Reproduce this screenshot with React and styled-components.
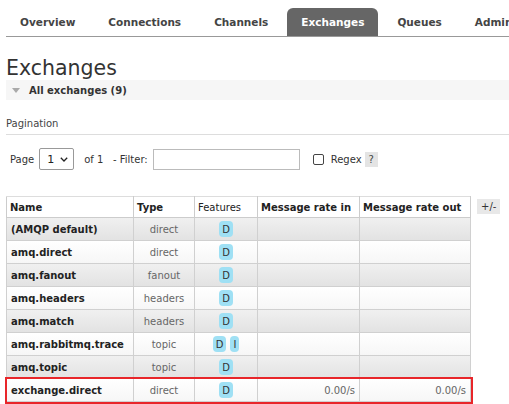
import React from 'react';
import styled, { createGlobalStyle } from 'styled-components';

const GlobalStyle = createGlobalStyle`
  body {
    margin: 0;
    background: #fff;
    font-family: "DejaVu Sans", Verdana, sans-serif;
    color: #444;
  }
`;

const Page = styled.div`
  width: 509px;
  height: 404px;
  overflow: hidden;
  padding: 8px 0 0 6px;
  box-sizing: border-box;
`;

const Tabs = styled.ul`
  display: flex;
  gap: 5px;
  margin: 0;
  padding: 0;
  list-style: none;
  border-bottom: 1px solid #999;
  white-space: nowrap;
`;

const Tab = styled.li`
  height: 28px;
  line-height: 28px;
  padding: 0 14px;
  font-size: 10.5px;
  font-weight: bold;
  color: ${p => (p.active ? '#fff' : '#444')};
  background: ${p => (p.active ? '#666' : 'transparent')};
  border-radius: 6px 6px 0 0;
`;

const Title = styled.h1`
  margin: 19px 0 0;
  font-size: 20.5px;
  font-weight: normal;
  color: #333;
  line-height: 24px;
`;

const SectionBar = styled.div`
  display: flex;
  align-items: center;
  gap: 9px;
  height: 20px;
  padding-left: 6px;
  background: #f6f6f6;
  font-size: 10px;
  font-weight: bold;
  color: #333;
`;

const Arrow = styled.span`
  width: 0;
  height: 0;
  border-left: 4px solid transparent;
  border-right: 4px solid transparent;
  border-top: 5px solid #aaa;
`;

const SubHead = styled.div`
  margin-top: 18px;
  padding-bottom: 5px;
  border-bottom: 1px solid #ddd;
  font-size: 10px;
  color: #444;
`;

const Controls = styled.div`
  display: flex;
  align-items: center;
  margin: 13px 0 0 4px;
  font-size: 10px;
  color: #333;
`;

const Select = styled.div`
  display: flex;
  align-items: center;
  gap: 6px;
  height: 20px;
  margin: 0 10px 0 5px;
  padding: 0 5px 0 7px;
  border: 1px solid #999;
  border-radius: 2px;
  font-size: 11px;
  color: #222;
`;

const FilterInput = styled.div`
  width: 145px;
  height: 19px;
  margin: 0 13px 0 5px;
  border: 1px solid #bbb;
`;

const Check = styled.span`
  width: 9px;
  height: 9px;
  margin-right: 7px;
  border: 1px solid #444;
  border-radius: 2px;
`;

const Help = styled.span`
  margin-left: 3px;
  padding: 2px 4px;
  background: #e4e4e4;
  color: #444;
`;

const TableRow = styled.div`
  display: flex;
  align-items: flex-start;
  gap: 6px;
  margin-top: 26px;
`;

const Table = styled.table`
  width: 464px;
  border-collapse: collapse;
  table-layout: fixed;
  font-size: 10px;
`;

const Th = styled.th`
  height: 20px;
  padding: 0 3px;
  text-align: ${p => p.align || 'left'};
  font-weight: ${p => (p.plain ? 'normal' : 'bold')};
  color: #222;
  border: 1px solid #ccc;
  border-top-color: #ddd;
  white-space: nowrap;
`;

const Tr = styled.tr`
  background: ${p =>
    p.odd
      ? 'linear-gradient(#f0f0f0, #e2e2e2)'
      : 'linear-gradient(#fff, #f6f6f6)'};
  outline: ${p => (p.mark ? '2px solid #e8262a' : 'none')};
  outline-offset: 0px;
`;

const Td = styled.td`
  height: 22px;
  padding: 0 4px;
  border: 1px solid #d0d0d0;
  text-align: ${p => p.align || 'left'};
  font-weight: ${p => (p.bold ? 'bold' : 'normal')};
  color: ${p => (p.bold ? '#222' : '#666')};
  white-space: nowrap;
`;

const Badge = styled.span`
  display: inline-block;
  margin: 0 2px;
  padding: 2px 3px 1px;
  border-radius: 4px;
  background: #9fe0f4;
  color: #333;
  line-height: 13px;
`;

const Toggle = styled.span`
  margin-top: 3px;
  padding: 2px 4px;
  background: #e8e8e8;
  font-size: 10px;
  color: #333;
`;

const Chevron = () => (
  <svg width="8" height="5" viewBox="0 0 8 5">
    <path d="M0.8 0.8 L4 4 L7.2 0.8" fill="none" stroke="#222" strokeWidth="1.3" />
  </svg>
);

const tabs = ['Overview', 'Connections', 'Channels', 'Exchanges', 'Queues', 'Admin'];

const exchanges = [
  { name: '(AMQP default)', type: 'direct', features: ['D'] },
  { name: 'amq.direct', type: 'direct', features: ['D'] },
  { name: 'amq.fanout', type: 'fanout', features: ['D'] },
  { name: 'amq.headers', type: 'headers', features: ['D'] },
  { name: 'amq.match', type: 'headers', features: ['D'] },
  { name: 'amq.rabbitmq.trace', type: 'topic', features: ['D', 'I'] },
  { name: 'amq.topic', type: 'topic', features: ['D'] },
  { name: 'exchange.direct', type: 'direct', features: ['D'], rateIn: '0.00/s', rateOut: '0.00/s', mark: true },
];

export default function App() {
  return (
    <Page>
      <GlobalStyle />
      <Tabs>
        {tabs.map(t => (
          <Tab key={t} active={t === 'Exchanges'}>{t}</Tab>
        ))}
      </Tabs>
      <Title>Exchanges</Title>
      <SectionBar>
        <Arrow />
        All exchanges (9)
      </SectionBar>
      <SubHead>Pagination</SubHead>
      <Controls>
        Page
        <Select>1 <Chevron /></Select>
        of 1 &nbsp; - Filter:
        <FilterInput />
        <Check />
        Regex
        <Help>?</Help>
      </Controls>
      <TableRow>
        <Table>
          <colgroup>
            <col style={{ width: 127 }} />
            <col style={{ width: 61 }} />
            <col style={{ width: 63 }} />
            <col style={{ width: 102 }} />
            <col style={{ width: 111 }} />
          </colgroup>
          <thead>
            <tr>
              <Th>Name</Th>
              <Th>Type</Th>
              <Th plain>Features</Th>
              <Th>Message rate in</Th>
              <Th>Message rate out</Th>
            </tr>
          </thead>
          <tbody>
            {exchanges.map((e, i) => (
              <Tr key={e.name} odd={i % 2 === 0} mark={e.mark}>
                <Td bold>{e.name}</Td>
                <Td align="center">{e.type}</Td>
                <Td align="center">
                  {e.features.map(f => <Badge key={f}>{f}</Badge>)}
                </Td>
                <Td align="right">{e.rateIn}</Td>
                <Td align="right">{e.rateOut}</Td>
              </Tr>
            ))}
          </tbody>
        </Table>
        <Toggle>+/-</Toggle>
      </TableRow>
    </Page>
  );
}
